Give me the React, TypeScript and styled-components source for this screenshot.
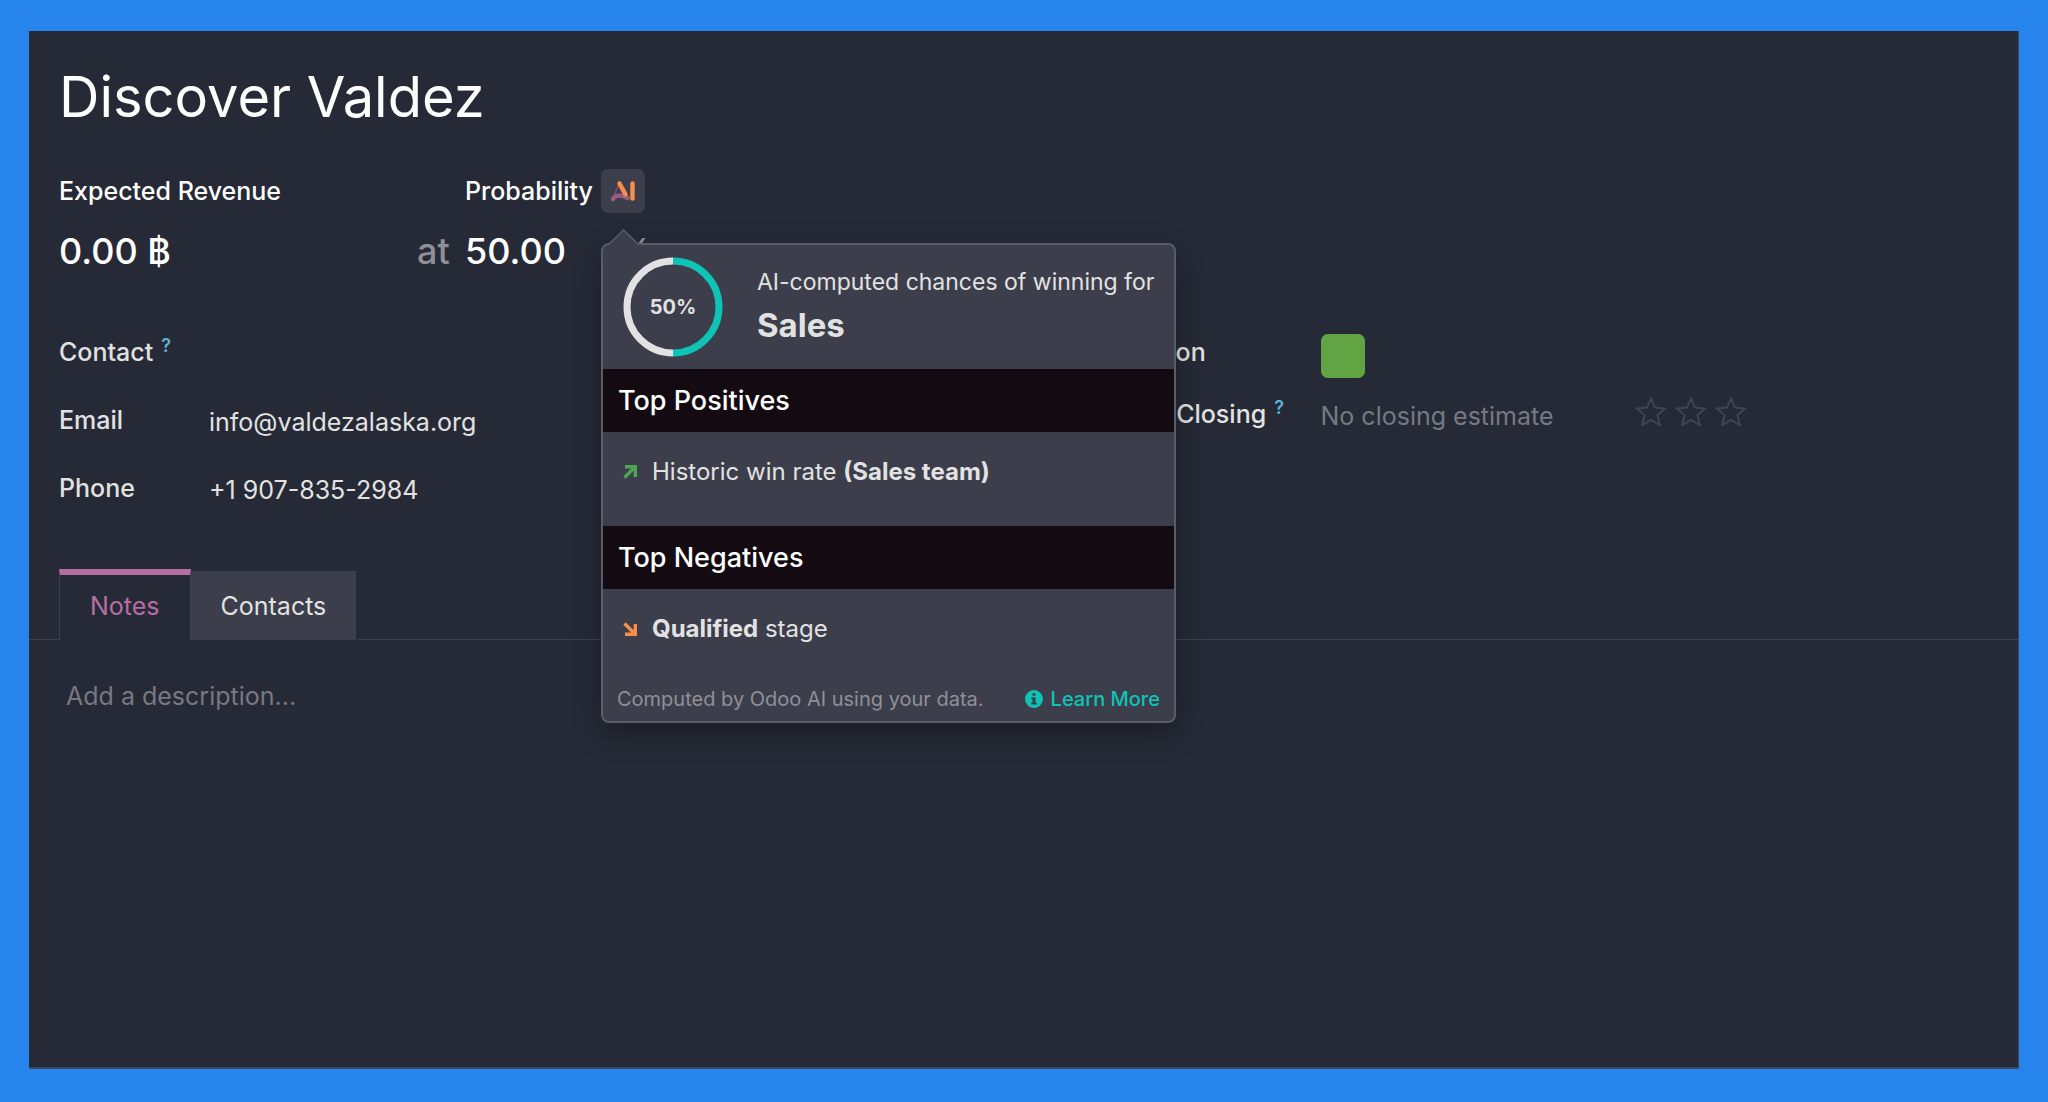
import React from "react";
import styled, { createGlobalStyle, css } from "styled-components";

const color = {
  frame: "#2684ec",
  panel: "#262a36",
  raised: "#3c3e4b",
  edge: "#5a5c68",
  line: "#3e414f",
  star: "#42444f",
  text: "#e2e2e2",
  strong: "#ffffff",
  muted: "#8f9097",
  faint: "#777982",
  band: "#130b11",
  teal: "#0ec4b6",
  pink: "#b56ea3",
  plum: "#985a80",
  orange: "#f88d4c",
  green: "#62a344",
  help: "#5cb5d6",
};

const Global = createGlobalStyle`
  *, *::before, *::after { box-sizing: border-box; }
  body {
    margin: 0;
    background: ${color.frame};
    color: ${color.text};
    font: 400 25px/36px Inter, "Noto Sans", sans-serif;
  }
  button, input, textarea { font: inherit; color: inherit; }
  h1, h2, p, ul { margin: 0; padding: 0; }
`;

const Page = styled.div`
  min-height: 100vh;
  padding: 31px 29px 33px;
  display: flex;
`;

const Panel = styled.main`
  flex: 1;
  min-width: 0;
  background: ${color.panel};
  border-right: 1px solid #3c4a60;
  border-bottom: 2px solid #3c4a60;
`;

const Sheet = styled.div`
  padding: 30px 30px 0;
`;

const Title = styled.h1`
  font-size: 56px;
  line-height: 72px;
  font-weight: 400;
  color: ${color.strong};
`;

const Summary = styled.div`
  margin-top: 36px;
  display: grid;
  grid-template-columns: 358px 48px auto;
  row-gap: 14px;
  color: ${color.strong};
`;

const LabelCell = styled.div<{ $column: number }>`
  grid-column: ${(p) => p.$column};
  grid-row: 1;
  height: 44px;
  display: flex;
  align-items: center;
  gap: 8px;
`;

const Label = styled.label`
  font-weight: 500;
  line-height: 38px;
`;

const BigInput = styled.input<{ $width: number }>`
  width: ${(p) => p.$width}px;
  height: 48px;
  padding: 0;
  border: 0;
  outline: 0;
  background: transparent;
  font-size: 36px;
  line-height: 48px;
  font-weight: 500;
`;

const Unit = styled.span`
  font-size: 36px;
  line-height: 48px;
  font-weight: 500;
  color: ${color.muted};
`;

const ValueCell = styled.div<{ $column: number }>`
  grid-column: ${(p) => p.$column};
  grid-row: 2;
  display: flex;
`;

const AiAnchor = styled.div`
  position: relative;
  height: 44px;
`;

const AiButton = styled.button`
  width: 44px;
  height: 44px;
  padding: 0;
  border: 0;
  border-radius: 7px;
  display: grid;
  place-items: center;
  background: ${color.raised};
`;

const Popover = styled.section`
  position: absolute;
  z-index: 2;
  top: 74px;
  left: 0;
  width: 575px;
  border: 2px solid ${color.edge};
  border-radius: 8px;
  background: ${color.raised};
  color: ${color.text};
  box-shadow: 0 10px 30px rgba(0, 0, 0, 0.3);
`;

const Pointer = styled.svg`
  position: absolute;
  top: -16px;
  left: 5px;
  display: block;
`;

const PopoverHead = styled.header`
  padding: 12px 14px 12px 20px;
  display: flex;
  align-items: center;
  gap: 34px;
`;

const Gauge = styled.div`
  width: 100px;
  height: 100px;
  flex: none;
  display: grid;
  place-items: center;
  & > * { grid-area: 1 / 1; }
`;

const GaugeValue = styled.span`
  font-size: 20px;
  font-weight: 700;
`;

const Caption = styled.p`
  font-size: 23px;
  white-space: nowrap;
`;

const TeamName = styled.p`
  font-size: 33px;
  line-height: 50px;
  font-weight: 700;
`;

const Band = styled.h2`
  height: 63px;
  padding: 0 15px;
  background: ${color.band};
  color: ${color.strong};
  font-size: 27px;
  line-height: 64px;
  font-weight: 500;
`;

const Reasons = styled.ul`
  list-style: none;
  padding: 22px 20px 36px;
  font-size: 24px;
`;

const Reason = styled.li`
  display: flex;
  align-items: center;
  gap: 15px;
`;

const PopoverFoot = styled.footer`
  padding: 2px 14px 8px;
  display: flex;
  justify-content: space-between;
  font-size: 20px;
  line-height: 28px;
  white-space: nowrap;
  color: ${color.muted};
`;

const LearnMore = styled.a`
  display: flex;
  align-items: center;
  gap: 8px;
  font-weight: 500;
  color: ${color.teal};
  text-decoration: none;
`;

const Groups = styled.div`
  margin-top: 59px;
  display: grid;
  grid-template-columns: 1fr 1fr;
  column-gap: 68px;
`;

const Group = styled.div<{ $gap: number }>`
  display: flex;
  flex-direction: column;
  gap: ${(p) => p.$gap}px;
`;

const Field = styled.div<{ $label: number }>`
  display: grid;
  grid-template-columns: ${(p) => p.$label}px 1fr;
`;

const FieldLabel = styled.label`
  font-weight: 500;
  white-space: nowrap;
`;

const Help = styled.sup`
  margin-left: 8px;
  font-size: 18px;
  line-height: 0;
  font-weight: 600;
  color: ${color.help};
`;

const FieldInput = styled.input`
  width: 100%;
  min-width: 0;
  height: 40px;
  padding: 0;
  border: 0;
  outline: 0;
  background: transparent;
  line-height: 40px;
  &::placeholder { color: ${color.faint}; opacity: 1; }
`;

const Swatch = styled.button`
  width: 44px;
  height: 44px;
  padding: 0;
  border: 0;
  border-radius: 7px;
  background: ${color.green};
`;

const Closing = styled.div`
  display: grid;
  grid-template-columns: 314px auto;
  justify-content: start;
`;

const Stars = styled.div`
  display: flex;
  gap: 8px;
`;

const StarButton = styled.button`
  width: 32px;
  height: 36px;
  padding: 0;
  border: 0;
  background: transparent;
`;

const Tabs = styled.div`
  margin-top: 59px;
  display: flex;
  align-items: flex-end;
  &::before {
    content: "";
    width: 30px;
    border-bottom: 1px solid ${color.line};
  }
  &::after {
    content: "";
    flex: 1;
    margin-left: 2px;
    border-bottom: 1px solid ${color.line};
  }
`;

const Tab = styled.button<{ $active?: boolean }>`
  padding: 0 30px;
  border: 0;
  height: 69px;
  background: ${color.raised};
  ${(p) =>
    p.$active &&
    css`
      height: 71px;
      border: solid ${color.line};
      border-width: 6px 1px 0;
      border-top-color: ${color.pink};
      padding-bottom: 4px;
      background: transparent;
      color: ${color.pink};
    `}
`;

const Description = styled.textarea`
  display: block;
  width: 100%;
  height: 200px;
  padding: 38px 37px;
  border: 0;
  outline: 0;
  resize: none;
  background: transparent;
  &::placeholder { color: ${color.faint}; opacity: 1; }
`;

const AiIcon = () => (
  <svg width="26" height="22" viewBox="0 0 26 22" fill="none" strokeLinecap="round" aria-hidden="true">
    <path d="M8 6L4.500 14.500" stroke={color.plum} strokeWidth="1.500" opacity="0.7" />
    <path d="M3 19C5.500 14.500 12 14.500 17.500 18" stroke={color.plum} strokeWidth="4.500" />
    <path d="M9.500 3.500L15.500 14.500" stroke={color.orange} strokeWidth="4.500" />
    <path d="M22.500 3.500V18.500" stroke={color.orange} strokeWidth="4.500" />
  </svg>
);

const TrendIcon = ({ down = false }: { down?: boolean }) => (
  <svg width="14" height="14" viewBox="0 0 14 14" fill="none" strokeWidth="3.400" aria-hidden="true">
    {down ? (
      <path d="M1.500 1.500L11 11M12.300 2V12.300H2" stroke={color.orange} />
    ) : (
      <path d="M1.500 12.500L11 3M2 1.700H12.300V12" stroke="#4fa650" />
    )}
  </svg>
);

const StarIcon = () => (
  <svg width="32" height="32" viewBox="0 0 32 32" fill="none" aria-hidden="true">
    <path
      d="M16 2.500L20 11.600L30 12.500L22.500 19L24.800 29L16 23.800L7.200 29L9.500 19L2 12.500L12 11.600Z"
      stroke={color.star}
      strokeWidth="2"
    />
  </svg>
);

const InfoIcon = () => (
  <svg width="18" height="18" viewBox="0 0 18 18" aria-hidden="true">
    <circle cx="9" cy="9" r="9" fill={color.teal} />
    <path d="M7.500 3.200H10.500V5.700H7.500ZM6.300 7.200H10.500V12.500H11.700V14.500H6.300V12.500H7.500V9.200H6.300Z" fill={color.raised} />
  </svg>
);

export default function App() {
  return (
    <>
      <Global />
      <Page>
        <Panel>
          <Sheet>
            <Title>Discover Valdez</Title>
            <Summary>
              <LabelCell $column={1}>
                <Label htmlFor="revenue">Expected Revenue</Label>
              </LabelCell>
              <LabelCell $column={3}>
                <Label htmlFor="probability">Probability</Label>
                <AiAnchor>
                  <AiButton type="button" aria-label="AI probability">
                    <AiIcon />
                  </AiButton>
                  <Popover>
                    <Pointer width="32" height="17" viewBox="0 0 32 17" aria-hidden="true">
                      <path d="M1 16L15.500 1.500L30 16V17H1Z" fill={color.raised} />
                      <path d="M1 15L15.500 1L30 15" fill="none" stroke={color.edge} strokeWidth="1.500" />
                    </Pointer>
                    <PopoverHead>
                      <Gauge>
                        <svg width="100" height="100" viewBox="0 0 100 100" fill="none" strokeWidth="7" aria-hidden="true">
                          <path d="M50 96A46 46 0 0 1 50 4" stroke={color.text} />
                          <path d="M50 4A46 46 0 0 1 50 96" stroke={color.teal} />
                        </svg>
                        <GaugeValue>50%</GaugeValue>
                      </Gauge>
                      <div>
                        <Caption>AI-computed chances of winning for</Caption>
                        <TeamName>Sales</TeamName>
                      </div>
                    </PopoverHead>
                    <Band>Top Positives</Band>
                    <Reasons>
                      <Reason>
                        <TrendIcon />
                        <span>Historic win rate <b>(Sales team)</b></span>
                      </Reason>
                    </Reasons>
                    <Band>Top Negatives</Band>
                    <Reasons>
                      <Reason>
                        <TrendIcon down />
                        <span><b>Qualified</b> stage</span>
                      </Reason>
                    </Reasons>
                    <PopoverFoot>
                      <span>Computed by Odoo AI using your data.</span>
                      <LearnMore href="#learn-more"><InfoIcon />Learn More</LearnMore>
                    </PopoverFoot>
                  </Popover>
                </AiAnchor>
              </LabelCell>
              <ValueCell $column={1}>
                <BigInput id="revenue" $width={300} defaultValue="0.00 ฿" />
              </ValueCell>
              <ValueCell $column={2}>
                <Unit>at</Unit>
              </ValueCell>
              <ValueCell $column={3}>
                <BigInput id="probability" $width={152} defaultValue="50.00" />
                <Unit>%</Unit>
              </ValueCell>
            </Summary>
            <Groups>
              <Group $gap={28}>
                <Field $label={150}>
                  <FieldLabel htmlFor="contact">Contact<Help>?</Help></FieldLabel>
                  <FieldInput id="contact" />
                </Field>
                <Field $label={150}>
                  <FieldLabel htmlFor="email">Email</FieldLabel>
                  <FieldInput id="email" type="email" defaultValue="info@valdezalaska.org" />
                </Field>
                <Field $label={150}>
                  <FieldLabel htmlFor="phone">Phone</FieldLabel>
                  <FieldInput id="phone" type="tel" defaultValue="+1 907-835-2984" />
                </Field>
              </Group>
              <Group $gap={18}>
                <Field $label={263}>
                  <FieldLabel htmlFor="salesperson">Salesperson</FieldLabel>
                  <Swatch id="salesperson" type="button" />
                </Field>
                <Field $label={263}>
                  <FieldLabel htmlFor="closing">Expected Closing<Help>?</Help></FieldLabel>
                  <Closing>
                    <FieldInput id="closing" placeholder="No closing estimate" />
                    <Stars>
                      {["Medium", "High", "Very high"].map((level) => (
                        <StarButton key={level} type="button" aria-label={level}><StarIcon /></StarButton>
                      ))}
                    </Stars>
                  </Closing>
                </Field>
              </Group>
            </Groups>
          </Sheet>
          <Tabs role="tablist">
            <Tab type="button" role="tab" aria-selected="true" $active>Notes</Tab>
            <Tab type="button" role="tab" aria-selected="false">Contacts</Tab>
          </Tabs>
          <Description aria-label="Description" placeholder="Add a description..." />
        </Panel>
      </Page>
    </>
  );
}
